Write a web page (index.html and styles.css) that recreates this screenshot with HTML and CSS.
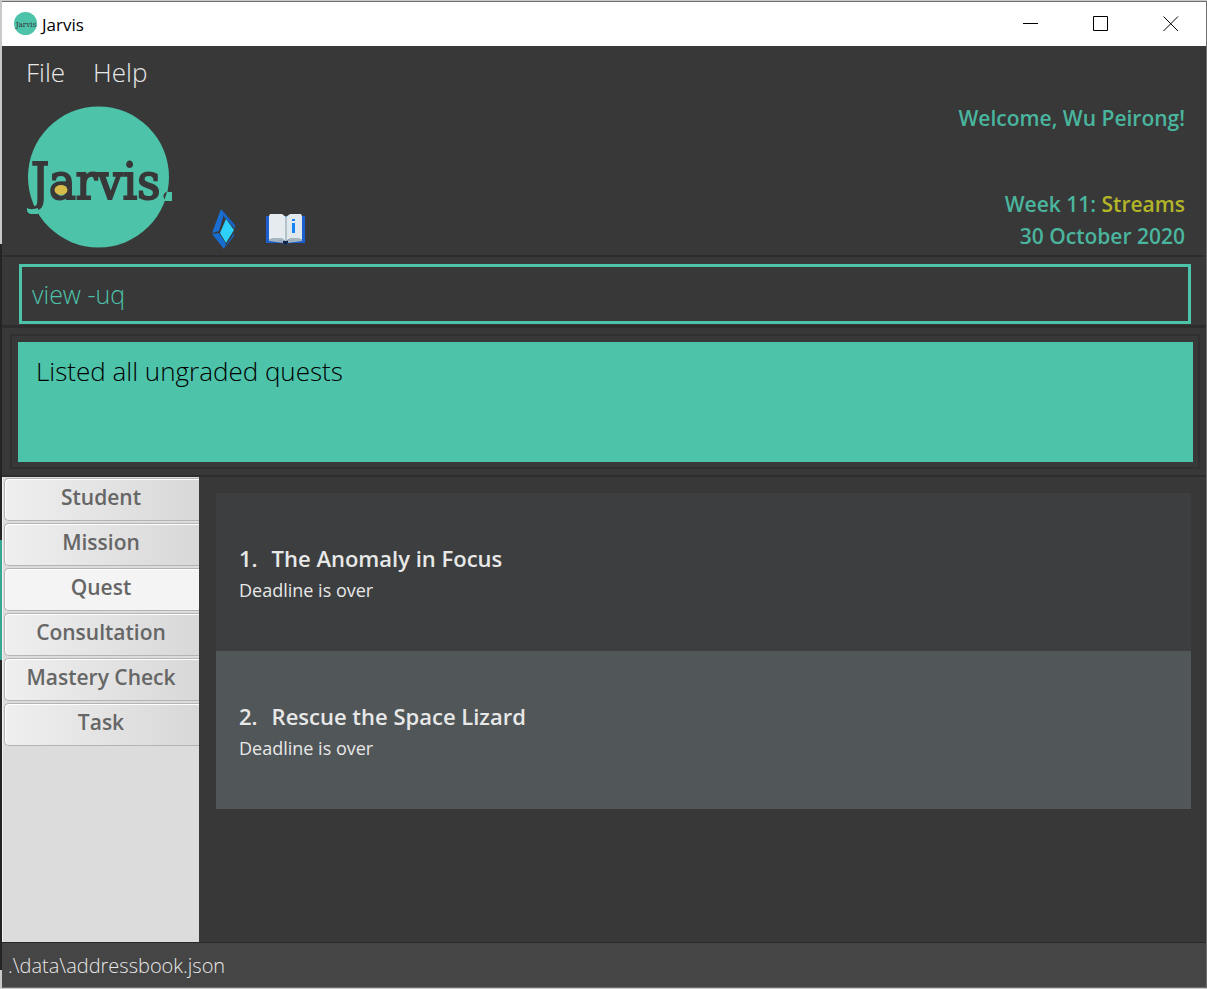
FILE: index.html
```html
<!DOCTYPE html>
<html lang="en">
<head>
<meta charset="utf-8">
<title>Jarvis</title>
<link rel="stylesheet" href="styles.css">
</head>
<body>
<div class="window">
  <header class="titlebar">
    <svg class="app-icon" viewBox="0 0 24 24" aria-hidden="true">
      <circle cx="11.5" cy="11.5" r="11.5" fill="#4dc3aa"/>
      <text class="logo-text small" x="12" y="15" text-anchor="middle">Jarvis</text>
    </svg>
    <h1 class="app-title">Jarvis</h1>
    <div class="window-controls">
      <button class="window-button" type="button" aria-label="Minimize"><svg viewBox="0 0 16 16"><path d="M0 7.5H15"/></svg></button>
      <button class="window-button" type="button" aria-label="Maximize"><svg viewBox="0 0 16 16"><path d="M.5.5H14.5V14.5H.5Z"/></svg></button>
      <button class="window-button" type="button" aria-label="Close"><svg viewBox="0 0 16 16"><path d="M.5.5L15 15M15 .5L.5 15"/></svg></button>
    </div>
  </header>

  <nav class="menubar">
    <button class="menu" type="button">File</button>
    <button class="menu" type="button">Help</button>
  </nav>

  <section class="banner">
    <svg class="logo" viewBox="0 0 148 144" role="img" aria-label="Jarvis">
      <circle cx="72.5" cy="72" r="70.5" fill="#4dc3aa"/>
      <text class="logo-text" x="5" y="94">Jarvis.</text>
      <ellipse cx="35" cy="85" rx="6.5" ry="5" fill="#d6bb48"/>
      <path d="M1 103C5 105 8 104 12 103V109H5Q1 108 1 105Z" fill="#4dc3aa"/>
      <path d="M141 87H146V96H138Z" fill="#4dc3aa"/>
    </svg>
    <div class="shortcuts">
      <button class="shortcut" type="button" aria-label="Source Academy">
        <svg width="24" height="42" viewBox="0 0 24 42">
          <path d="M9 0L12 5L7 22L0 24Z" fill="#1a6ed1"/>
          <path d="M10 1L23 16V20L12 8Z" fill="#1765c4"/>
          <path d="M0 25L7 24L14 35L12 40Z" fill="#176ccf"/>
          <path d="M14 10L22 21L14 34L8 24Z" fill="#2dd1fc"/>
          <path d="M22 24V27L13 39L15 35Z" fill="#1765c4"/>
        </svg>
      </button>
      <button class="shortcut" type="button" aria-label="User guide">
        <svg width="40" height="34" viewBox="0 0 40 34">
          <path d="M0 3H39V30H23Q19 33 16 30H0Z" fill="#1b5fd0"/>
          <path d="M3 26L18 28L20 29L22 28L36 26V28L21 30H18L3 28Z" fill="#a5b5bd"/>
          <path d="M4 1H16L20 4V28L16 26H3V3Z" fill="#e6ebef"/>
          <path d="M35 1H24L20 4V28L23 26H36V3Z" fill="#e1e8ed"/>
          <path d="M3 27L6 25H16L19 28ZM21 28L24 25H33L36 27Z" fill="#a5b5bd"/>
          <path d="M19 4H21V28H19Z" fill="#b4c2ca"/>
          <path d="M26 6H29V8H26ZM26 10H29V20H26Z" fill="#1684f5"/>
          <path d="M17 28H22V30L19 32L17 30Z" fill="#14243b"/>
        </svg>
      </button>
    </div>
    <div class="greeting">
      <p class="welcome">Welcome, Wu Peirong!</p>
      <p class="week">Week 11: <span class="topic">Streams</span></p>
      <p class="date">30 October 2020</p>
    </div>
  </section>

  <div class="command-row">
    <input class="command" type="text" value="view -uq" aria-label="Command">
  </div>

  <div class="result-row">
    <div class="result-frame"><output class="result">Listed all ungraded quests</output></div>
  </div>

  <main class="content">
    <div class="tabs" role="tablist" aria-orientation="vertical">
      <button class="tab" role="tab" type="button">Student</button>
      <button class="tab" role="tab" type="button">Mission</button>
      <button class="tab selected" role="tab" type="button" aria-selected="true">Quest</button>
      <button class="tab" role="tab" type="button">Consultation</button>
      <button class="tab" role="tab" type="button">Mastery Check</button>
      <button class="tab" role="tab" type="button">Task</button>
    </div>
    <ul class="quests">
      <li class="quest">
        <h2 class="quest-title"><span>1.</span><span>The Anomaly in Focus</span></h2>
        <p class="deadline">Deadline is over</p>
      </li>
      <li class="quest">
        <h2 class="quest-title"><span>2.</span><span>Rescue the Space Lizard</span></h2>
        <p class="deadline">Deadline is over</p>
      </li>
    </ul>
  </main>

  <footer class="statusbar">.\data\addressbook.json</footer>
</div>
</body>
</html>
```
FILE: styles.css
```css
* {
  box-sizing: border-box;
}

body {
  margin: 0;
  min-height: 100vh;
  padding: 1px 0 1px 2px;
  display: flex;
  background: linear-gradient(#c9c9c9 244px, #242424 244px, #242424 540px, #35a893 540px, #35a893 660px, #242424 660px, #242424 970px, #c9c9c9 970px);
  font-family: "Open Sans", "Noto Sans", sans-serif;
  color: #e8e8e8;
}

h1, h2, p, ul {
  margin: 0;
  padding: 0;
}

button {
  font: inherit;
  color: inherit;
  background: none;
  border: 0;
  padding: 0;
}

.window {
  flex: 1;
  display: flex;
  flex-direction: column;
  background: #383838;
  border: 1px solid #707070;
  border-left: 0;
}

.titlebar {
  height: 44px;
  display: flex;
  align-items: center;
  background: #fff;
  color: #000;
  padding-left: 12px;
}

.app-icon {
  width: 24px;
  height: 24px;
}

.logo-text {
  font-family: "DejaVu Serif Condensed", "DejaVu Serif", serif;
  font-size: 50px;
  fill: #383838;
  stroke: #383838;
  stroke-width: 2px;
}

.logo-text.small {
  font-size: 8px;
  stroke-width: 0;
}

.app-title {
  flex: 1;
  margin-left: 4px;
  font-size: 17px;
  font-weight: 400;
}

.window-controls {
  display: flex;
}

.window-button {
  width: 70px;
  height: 44px;
  display: grid;
  place-items: center;
}

.window-button svg {
  width: 16px;
  height: 16px;
  fill: none;
  stroke: #000;
}

.menubar {
  display: flex;
  gap: 28px;
  padding: 8px 24px 0;
}

.menu {
  font-size: 26px;
  font-weight: 300;
  line-height: 36px;
}

.banner {
  height: 167px;
  display: flex;
  padding: 15px 21px 0 24px;
  border-bottom: 2px solid #2d2d2d;
}

.logo {
  width: 148px;
  height: 144px;
  overflow: visible;
}

.shortcuts {
  display: flex;
  align-items: center;
  align-self: flex-end;
  gap: 30px;
  margin: 0 0 4px 38px;
}

.shortcut svg {
  display: block;
}

.greeting {
  margin: -3px 0 0 auto;
  color: #4ab59e;
  font-size: 21px;
  font-weight: 600;
  line-height: 32px;
  text-align: right;
}

.week {
  margin-top: 54px;
}

.topic {
  color: #b3b528;
}

.command-row {
  padding: 7px 15px 1px 17px;
  border-bottom: 3px solid #2d2d2d;
}

.command {
  display: block;
  width: 100%;
  height: 60px;
  padding: 0 10px;
  border: 3px solid #4dc3aa;
  background: #383838;
  color: #4dc3aa;
  font: 300 25px "Open Sans", "Noto Sans", sans-serif;
  outline: 0;
}

.result-row {
  padding: 6px 6px 6px 8px;
  border-bottom: 2px solid #2d2d2d;
}

.result-frame {
  padding: 6px 5px 5px 6px;
  border: 2px solid #303030;
}

.result {
  display: block;
  height: 120px;
  padding: 11px 18px;
  background: #4dc3aa;
  color: #000;
  font-size: 26px;
  font-weight: 300;
  line-height: 36px;
}

.content {
  flex: 1;
  display: flex;
  border-bottom: 1px solid #282828;
}

.tabs {
  width: 197px;
  display: flex;
  flex-direction: column;
  gap: 2px;
  padding: 1px 0 0 1px;
  background: #dcdcdc;
  border-left: 1px solid #f2f2f2;
}

.tab {
  height: 43px;
  border: solid #b4b4b4;
  border-width: 1px 0 1px 1px;
  border-radius: 5px 0 0 5px;
  background: linear-gradient(90deg, #efefef, #d8d8d8);
  box-shadow: inset 1px 1px 0 #fff;
  color: #666;
  font-size: 21px;
  font-weight: 600;
  line-height: 32px;
  padding: 0 2px 6px 0;
}

.tab.selected {
  background: #f4f4f4;
}

.quests {
  flex: 1;
  padding: 16px 15px 16px 17px;
  list-style: none;
}

.quest {
  height: 158px;
  padding: 49px 23px;
  background: #3c3e3f;
}

.quest:nth-child(even) {
  background: #515658;
}

.quest-title {
  display: flex;
  gap: 14px;
  font-size: 22px;
  font-weight: 600;
  line-height: 32px;
}

.deadline {
  font-size: 18px;
  line-height: 32px;
}

.statusbar {
  height: 44px;
  padding: 7px 6px;
  background: #454545;
  font-size: 20px;
  font-weight: 300;
  line-height: 32px;
}
```
